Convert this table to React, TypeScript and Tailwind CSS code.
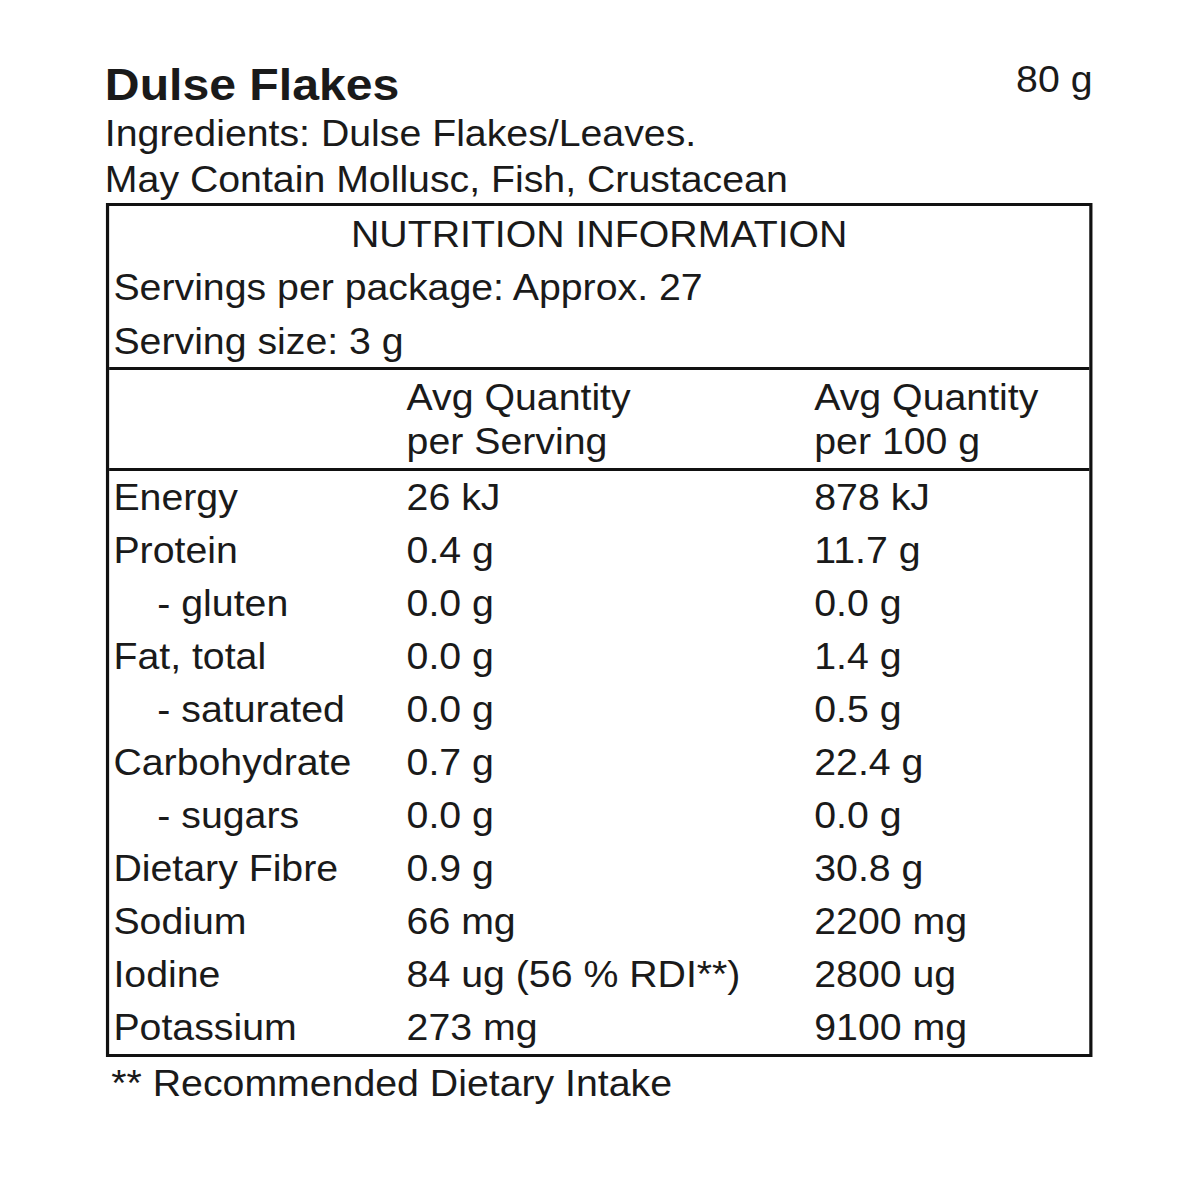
import React from "react";

type Row = { label: string; serving: string; per100: string; sub?: boolean };

const rows: Row[] = [
  { label: "Energy", serving: "26 kJ", per100: "878 kJ" },
  { label: "Protein", serving: "0.4 g", per100: "11.7 g" },
  { label: "- gluten", serving: "0.0 g", per100: "0.0 g", sub: true },
  { label: "Fat, total", serving: "0.0 g", per100: "1.4 g" },
  { label: "- saturated", serving: "0.0 g", per100: "0.5 g", sub: true },
  { label: "Carbohydrate", serving: "0.7 g", per100: "22.4 g" },
  { label: "- sugars", serving: "0.0 g", per100: "0.0 g", sub: true },
  { label: "Dietary Fibre", serving: "0.9 g", per100: "30.8 g" },
  { label: "Sodium", serving: "66 mg", per100: "2200 mg" },
  { label: "Iodine", serving: "84 ug (56 % RDI**)", per100: "2800 ug" },
  { label: "Potassium", serving: "273 mg", per100: "9100 mg" },
];

export default function App() {
  return (
    <div className="w-[1200px] h-[1200px] bg-white overflow-hidden text-[#1a1a1a] font-['Liberation_Sans',Arial,sans-serif]">
      {/* label is drawn a bit wide, like the source image */}
      <div className="origin-top-left scale-x-[1.07] pt-[63px] pl-[99px] w-[1121px]">
        <div className="w-[922px]">
          <div className="flex justify-between items-start">
            <div className="-ml-[1px] text-[45px] font-bold leading-[44px]">Dulse Flakes</div>
            <div className="-mt-[5px] text-[36.7px] leading-[44px]">80 g</div>
          </div>
          <div className="-ml-[1px] pt-[4px] text-[36.7px] leading-[46px]">
            <div>Ingredients: Dulse Flakes/Leaves.</div>
            <div>May Contain Mollusc, Fish, Crustacean</div>
          </div>
        </div>

        <div className="w-[922px] border-[3px] border-[#111] text-[36.7px]">
          <div className="pt-[3px]">
            <div className="h-[51px] leading-[51px] text-center">NUTRITION INFORMATION</div>
            <div className="h-[56px] leading-[56px] pl-[4px]">Servings per package: Approx. 27</div>
            <div className="h-[51px] leading-[51px] pl-[4px]">Serving size: 3 g</div>
          </div>

          <div className="flex border-y-[3px] border-[#111] pt-[6px] pb-[4px] leading-[44px]">
            <div className="w-[278px]" />
            <div className="w-[381px]">
              <div>Avg Quantity</div>
              <div>per Serving</div>
            </div>
            <div>
              <div>Avg Quantity</div>
              <div>per 100 g</div>
            </div>
          </div>

          <div>
            {rows.map((r) => (
              <div key={r.label} className="flex h-[53px] leading-[53px]">
                <div className={r.sub ? "w-[278px] pl-[45px]" : "w-[278px] pl-[4px]"}>{r.label}</div>
                <div className="w-[381px] whitespace-nowrap">{r.serving}</div>
                <div>{r.per100}</div>
              </div>
            ))}
          </div>
        </div>

        <div className="pt-[5px] pl-[5px] text-[36.7px] leading-[44px]">** Recommended Dietary Intake</div>
      </div>
    </div>
  );
}
